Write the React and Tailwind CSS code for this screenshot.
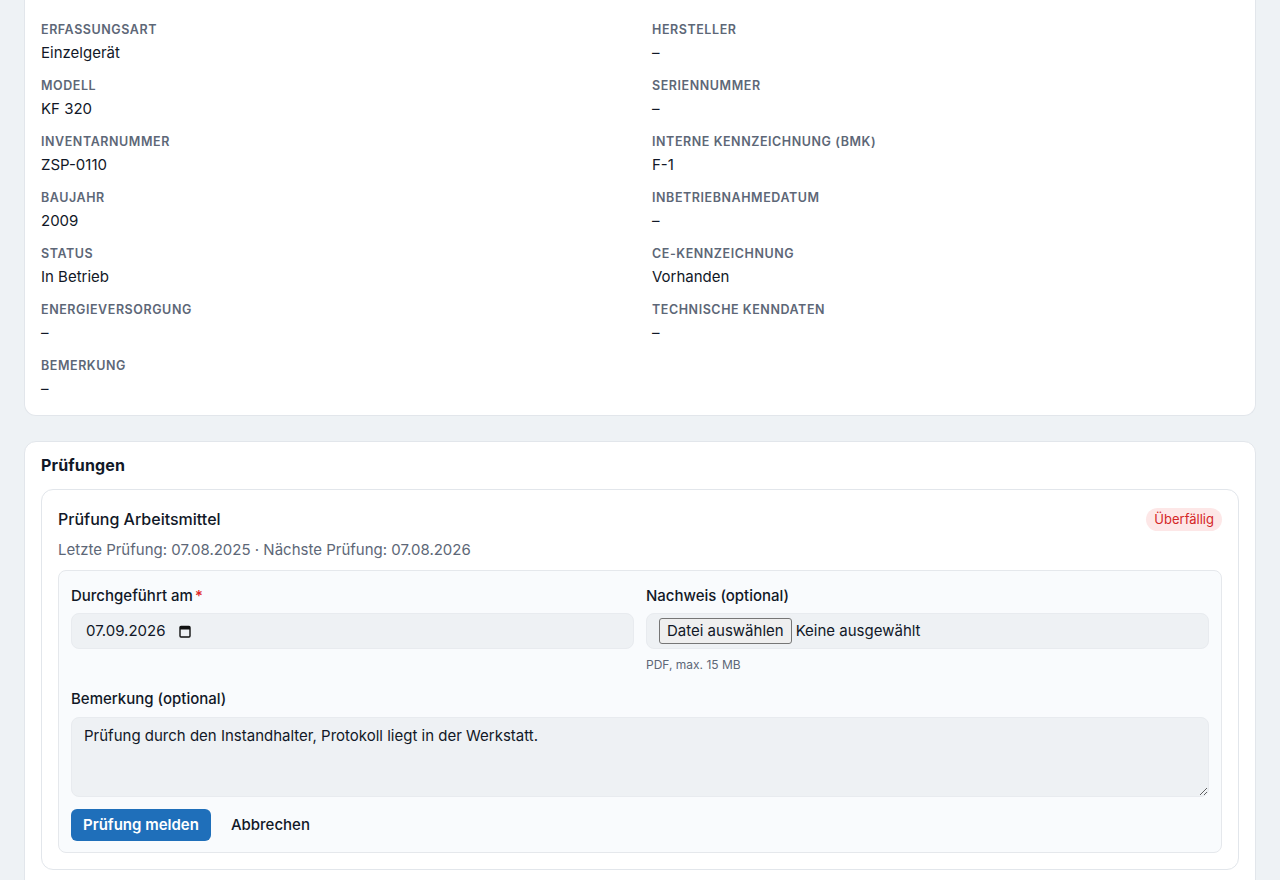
import React from 'react';

const fields = [
  ['Erfassungsart', 'Einzelgerät'],
  ['Hersteller', '–'],
  ['Modell', 'KF 320'],
  ['Seriennummer', '–'],
  ['Inventarnummer', 'ZSP-0110'],
  ['Interne Kennzeichnung (BMK)', 'F-1'],
  ['Baujahr', '2009'],
  ['Inbetriebnahmedatum', '–'],
  ['Status', 'In Betrieb'],
  ['CE-Kennzeichnung', 'Vorhanden'],
  ['Energieversorgung', '–'],
  ['Technische Kenndaten', '–'],
  ['Bemerkung', '–'],
];

const CalendarIcon = () => (
  <svg width="12" height="13" viewBox="0 0 12 13" className="ml-[13px]">
    <rect x="1" y="1.5" width="10" height="10.5" rx="1" fill="none" stroke="#111" strokeWidth="1.4" />
    <rect x="1" y="1.5" width="10" height="3" fill="#111" />
  </svg>
);

export default function App() {
  return (
    <div className="min-h-[880px] bg-[#eef2f5] px-6 pb-6 text-[#111827]" style={{ fontFamily: 'Inter, "Noto Sans", sans-serif' }}>
      <div className="flex flex-col gap-[25px]">
        <section className="rounded-b-xl border-x border-b border-[#e2e6eb] bg-white px-4 pt-[22px] pb-[15px]">
          <div className="grid grid-cols-2 gap-x-6 gap-y-[14px]">
            {fields.map(([label, value]) => (
              <div key={label}>
                <div className="text-[12.5px] font-semibold uppercase leading-4 tracking-[0.045em] text-[#5d6777]">{label}</div>
                <div className="mt-1 text-[15px] leading-[22px]">{value}</div>
              </div>
            ))}
          </div>
        </section>

        <section className="rounded-xl border border-[#e2e6eb] bg-white px-4 pt-[13px] pb-6">
          <h2 className="text-[16px] font-bold leading-5 tracking-[0.01em]">Prüfungen</h2>
          <div className="mt-[14px] rounded-xl border border-[#e2e6eb] bg-white px-4 pt-[17px] pb-4">
            <div className="flex items-center justify-between">
              <h3 className="text-[16px] font-medium leading-6">Prüfung Arbeitsmittel</h3>
              <span className="rounded-full bg-[#fde7e7] px-2 py-[3px] text-[13px] leading-[17px] text-[#d42626]">Überfällig</span>
            </div>
            <p className="mt-2 text-[15px] leading-[22px] text-[#5d6777]">Letzte Prüfung: 07.08.2025 · Nächste Prüfung: 07.08.2026</p>

            <div className="mt-[9px] rounded-lg border border-[#e5e8ec] bg-[#f9fbfd] px-3 pt-3 pb-[11px]">
              <div className="grid grid-cols-2 gap-x-3">
                <div>
                  <label className="block text-[15px] font-medium leading-[26px]">
                    Durchgeführt am<span className="ml-0.5 text-[#e02424]">*</span>
                  </label>
                  <div className="mt-1 flex h-9 items-center rounded-lg border border-[#e8ebef] bg-[#eef1f4] px-3.5 text-[15px]">
                    07.09.2026
                    <CalendarIcon />
                  </div>
                </div>
                <div>
                  <label className="block text-[15px] font-medium leading-[26px]">Nachweis (optional)</label>
                  <div className="mt-1 flex h-9 items-center rounded-lg border border-[#e8ebef] bg-[#eef1f4] px-3 text-[15px]">
                    <span className="rounded-[3px] border border-[#767676] bg-[#efefef] px-[7px] leading-[24px]">Datei auswählen</span>
                    <span className="ml-1">Keine ausgewählt</span>
                  </div>
                  <p className="mt-2 text-[12px] leading-4 text-[#5d6777]">PDF, max. 15 MB</p>
                </div>
              </div>

              <div className="mt-[14px]">
                <label className="block text-[15px] font-medium leading-6">Bemerkung (optional)</label>
                <textarea
                  className="mt-1.5 block h-20 w-full rounded-lg border border-[#e8ebef] bg-[#eef1f4] px-3 pt-[7px] text-[15px] leading-[22px] outline-none"
                  defaultValue="Prüfung durch den Instandhalter, Protokoll liegt in der Werkstatt."
                />
              </div>

              <div className="mt-3 flex items-center gap-5">
                <button className="h-8 rounded-md bg-[#1f6fba] px-3 text-[15px] font-semibold text-white">Prüfung melden</button>
                <button className="text-[15px] font-medium">Abbrechen</button>
              </div>
            </div>
          </div>
        </section>
      </div>
    </div>
  );
}
